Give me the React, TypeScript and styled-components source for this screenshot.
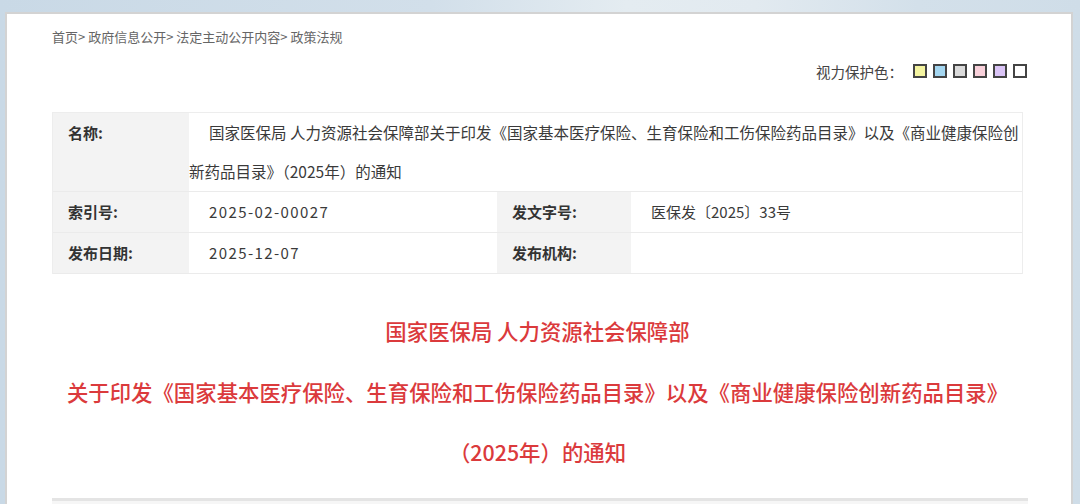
import React from "react";
import styled, { createGlobalStyle } from "styled-components";

const GlobalStyle = createGlobalStyle`
  html, body {
    margin: 0;
    padding: 0;
  }
  body {
    height: 504px;
    overflow: hidden;
    font-family: "Noto Sans CJK SC", "Noto Sans", sans-serif;
    background: linear-gradient(
      90deg,
      #c9d9e6 0%,
      #d2dfea 40%,
      #e4ecf1 58%,
      #e2eaf0 70%,
      #d3e0ea 85%,
      #cfdde8 100%
    );
  }
`;

const Card = styled.div`
  margin: 12px 0 0 5px;
  width: 1068px;
  min-height: 500px;
  background: #fff;
  border: 2px solid #d3d3d3;
  border-bottom: none;
  padding: 0 48px 0 45px;
  box-sizing: border-box;
`;

const Breadcrumb = styled.div`
  padding-top: 13px;
  font-size: 13px;
  line-height: 20px;
  color: #666;
  white-space: nowrap;
`;

const ColorRow = styled.div`
  margin-top: 14px;
  margin-right: -4px;
  display: flex;
  justify-content: flex-end;
  align-items: center;
  height: 20px;
`;

const ColorLabel = styled.span`
  font-size: 14.5px;
  color: #444;
  margin-right: 10px;
`;

const Swatches = styled.div`
  display: flex;
  gap: 6px;
`;

const Swatch = styled.span<{ $bg: string }>`
  width: 14px;
  height: 14px;
  box-sizing: border-box;
  border: 2px solid #444;
  background: ${(p) => p.$bg};
`;

const InfoTable = styled.div`
  margin-top: 31px;
  display: grid;
  grid-template-columns: 136px 308px 134px 1fr;
  border: 1px solid #ededed;
  border-bottom: none;
  font-size: 15px;
`;

const Label = styled.div<{ $tall?: boolean }>`
  background: #f3f3f3;
  color: #333;
  font-weight: 700;
  padding-left: 15px;
  line-height: ${(p) => (p.$tall ? "39px" : "40px")};
  height: ${(p) => (p.$tall ? "78px" : "40px")};
  border-bottom: 1px solid #ebebeb;
`;

const Value = styled.div<{ $span?: number; $tall?: boolean; $wide?: boolean }>`
  grid-column: span ${(p) => p.$span ?? 1};
  color: #3a3a3a;
  line-height: ${(p) => (p.$tall ? "39px" : "40px")};
  text-indent: 20px;
  border-bottom: 1px solid #ebebeb;
  letter-spacing: ${(p) => (p.$wide ? "1.4px" : "0")};
  ${(p) =>
    p.$tall
      ? "height: 78px; overflow: hidden; font-size: 15.5px;"
      : "white-space: nowrap;"}
`;

const TitleBlock = styled.div`
  margin-top: 27px;
  text-align: center;
  color: #db3a3c;
  font-size: 21.4px;
  font-weight: 500;
  margin-left: -10px;
  margin-right: -10px;
`;

const TitleLine = styled.div`
  line-height: 60.5px;
  white-space: nowrap;
`;

const Divider = styled.div`
  margin-top: 15px;
  margin-right: -5px;
  border-top: 3px solid #e4e4e4;
  height: 10px;
  background: #f6f6f6;
`;

const swatchColors = ["#f4f4a0", "#a4d6f0", "#dadada", "#f8d0da", "#dac4f6", "#ffffff"];

export default function App() {
  return (
    <>
      <GlobalStyle />
      <Card>
        <Breadcrumb>首页&gt; 政府信息公开&gt; 法定主动公开内容&gt; 政策法规</Breadcrumb>
        <ColorRow>
          <ColorLabel>视力保护色：</ColorLabel>
          <Swatches>
            {swatchColors.map((c) => (
              <Swatch key={c} $bg={c} />
            ))}
          </Swatches>
        </ColorRow>
        <InfoTable>
          <Label $tall>名称:</Label>
          <Value $span={3} $tall>
            国家医保局 人力资源社会保障部关于印发《国家基本医疗保险、生育保险和工伤保险药品目录》以及《商业健康保险创新药品目录》（2025年）的通知
          </Value>
          <Label>索引号:</Label>
          <Value $wide>2025-02-00027</Value>
          <Label>发文字号:</Label>
          <Value>医保发〔2025〕33号</Value>
          <Label>发布日期:</Label>
          <Value $wide>2025-12-07</Value>
          <Label>发布机构:</Label>
          <Value />
        </InfoTable>
        <TitleBlock>
          <TitleLine>国家医保局 人力资源社会保障部</TitleLine>
          <TitleLine>
            关于印发《国家基本医疗保险、生育保险和工伤保险药品目录》以及《商业健康保险创新药品目录》
          </TitleLine>
          <TitleLine>（2025年）的通知</TitleLine>
        </TitleBlock>
        <Divider />
      </Card>
    </>
  );
}
